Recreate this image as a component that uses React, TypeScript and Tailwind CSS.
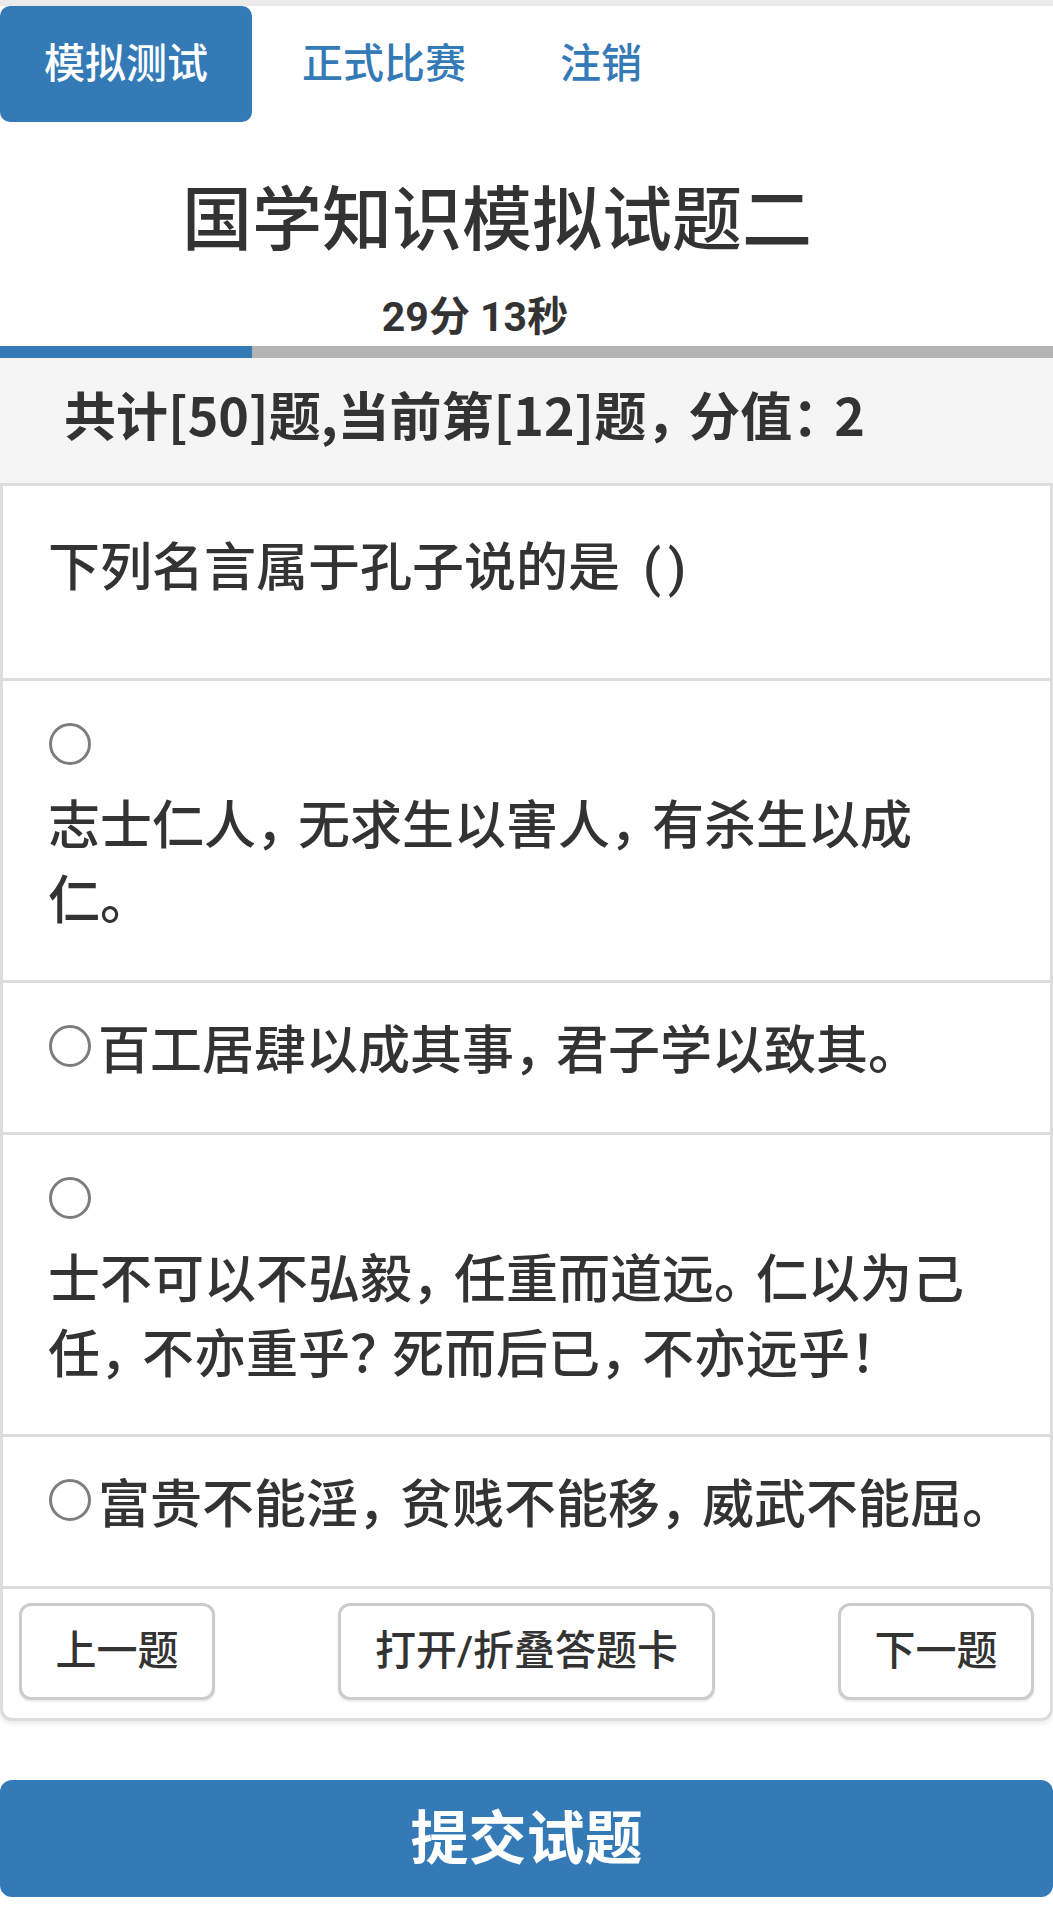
import React from "react";

const PUNCT = "，。：？！";

function T({ text }: { text: string }) {
  const parts: React.ReactNode[] = [];
  let buf = "";
  let k = 0;
  for (const ch of text) {
    if (PUNCT.includes(ch)) {
      if (buf) parts.push(buf);
      buf = "";
      parts.push(
        <span key={k++} className="tracking-[-10px]">
          {ch}
        </span>
      );
    } else {
      buf += ch;
    }
  }
  if (buf) parts.push(buf);
  return <>{parts}</>;
}

function Radio({ className = "" }: { className?: string }) {
  return (
    <span
      className={
        "block h-[42px] w-[42px] shrink-0 rounded-full border-[3px] border-[#7d7d7d] bg-white " +
        className
      }
    />
  );
}

function OptionStacked({ lines }: { lines: string[] }) {
  return (
    <div className="border-t-[3px] border-[#dddddd] pl-[45px] pt-[42px] pb-[41px]">
      <Radio className="ml-[1px]" />
      <div className="mt-[24px] text-[52px] font-medium leading-[75px]">
        {lines.map((l) => (
          <div key={l} className="whitespace-nowrap">
            <T text={l} />
          </div>
        ))}
      </div>
    </div>
  );
}

function OptionInline({ text }: { text: string }) {
  return (
    <div className="flex items-start border-t-[3px] border-[#dddddd] pl-[45px] pt-[31px] pb-[43px]">
      <Radio className="ml-[1px] mt-[11px]" />
      <span className="ml-[7px] whitespace-nowrap text-[52px] font-medium leading-[75px]">
        <T text={text} />
      </span>
    </div>
  );
}

const btn =
  "flex h-[97px] items-center justify-center rounded-[12px] border-[3px] border-[#cccccc] bg-white text-[41px] font-medium leading-none text-[#333333] shadow-[0_2px_2px_rgba(0,0,0,0.08)]";

export default function App() {
  return (
    <div className="min-h-[1920px] w-[1053px] bg-white font-['Roboto','Noto_Sans_CJK_SC',sans-serif] text-[#333333]">
      <div className="h-[6px] bg-[#ebebeb]" />
      <nav className="flex gap-[6px]">
        <div className="flex h-[116px] items-center rounded-[10px] bg-[#337ab7] px-[44px] text-[41px] font-medium leading-none text-white">
          模拟测试
        </div>
        <div className="flex h-[116px] items-center px-[44px] text-[41px] font-medium leading-none text-[#337ab7]">
          正式比赛
        </div>
        <div className="flex h-[116px] items-center px-[44px] text-[41px] font-medium leading-none text-[#337ab7]">
          注销
        </div>
      </nav>

      <h2 className="mt-[61px] pr-[59px] text-center text-[70px] font-medium leading-[77px]">
        国学知识模拟试题二
      </h2>
      <div className="mt-[28px] pr-[103px] text-center text-[41px] font-bold leading-[58px]">
        29分 13秒
      </div>

      <div className="flex h-[12px] bg-[#b3b3b3]">
        <div className="w-[252px] bg-[#337ab7]" />
      </div>

      <div className="h-[125px] whitespace-nowrap bg-[#f5f5f5] pl-[64px] pt-[18px] font-['Noto_Sans_CJK_SC',sans-serif] text-[52px] font-bold leading-[75px]">
        <T text="共计[50]题,当前第[12]题，分值：2" />
      </div>

      <div className="rounded-b-[12px] border-[3px] border-[#dddddd] bg-white shadow-[0_3px_4px_rgba(0,0,0,0.08)]">
        <div className="whitespace-nowrap pl-[45px] pt-[45px] pb-[72px] text-[52px] font-medium leading-[75px]">
          下列名言属于孔子说的是<span className="ml-[23px]">(</span>
          <span className="ml-[7px]">)</span>
        </div>
        <OptionStacked lines={["志士仁人，无求生以害人，有杀生以成", "仁。"]} />
        <OptionInline text="百工居肆以成其事，君子学以致其。" />
        <OptionStacked
          lines={["士不可以不弘毅，任重而道远。仁以为己", "任，不亦重乎？死而后已，不亦远乎！"]}
        />
        <OptionInline text="富贵不能淫，贫贱不能移，威武不能屈。" />
        <div className="flex justify-between border-t-[3px] border-[#dddddd] px-[16px] pt-[14px] pb-[18px]">
          <button className={btn + " w-[196px]"}>上一题</button>
          <button className={btn + " w-[377px]"}>打开/折叠答题卡</button>
          <button className={btn + " w-[196px]"}>下一题</button>
        </div>
      </div>

      <button className="mt-[59px] flex h-[117px] w-full items-center justify-center rounded-[12px] bg-[#337ab7] text-[58px] font-bold leading-none text-white">
        提交试题
      </button>
    </div>
  );
}
